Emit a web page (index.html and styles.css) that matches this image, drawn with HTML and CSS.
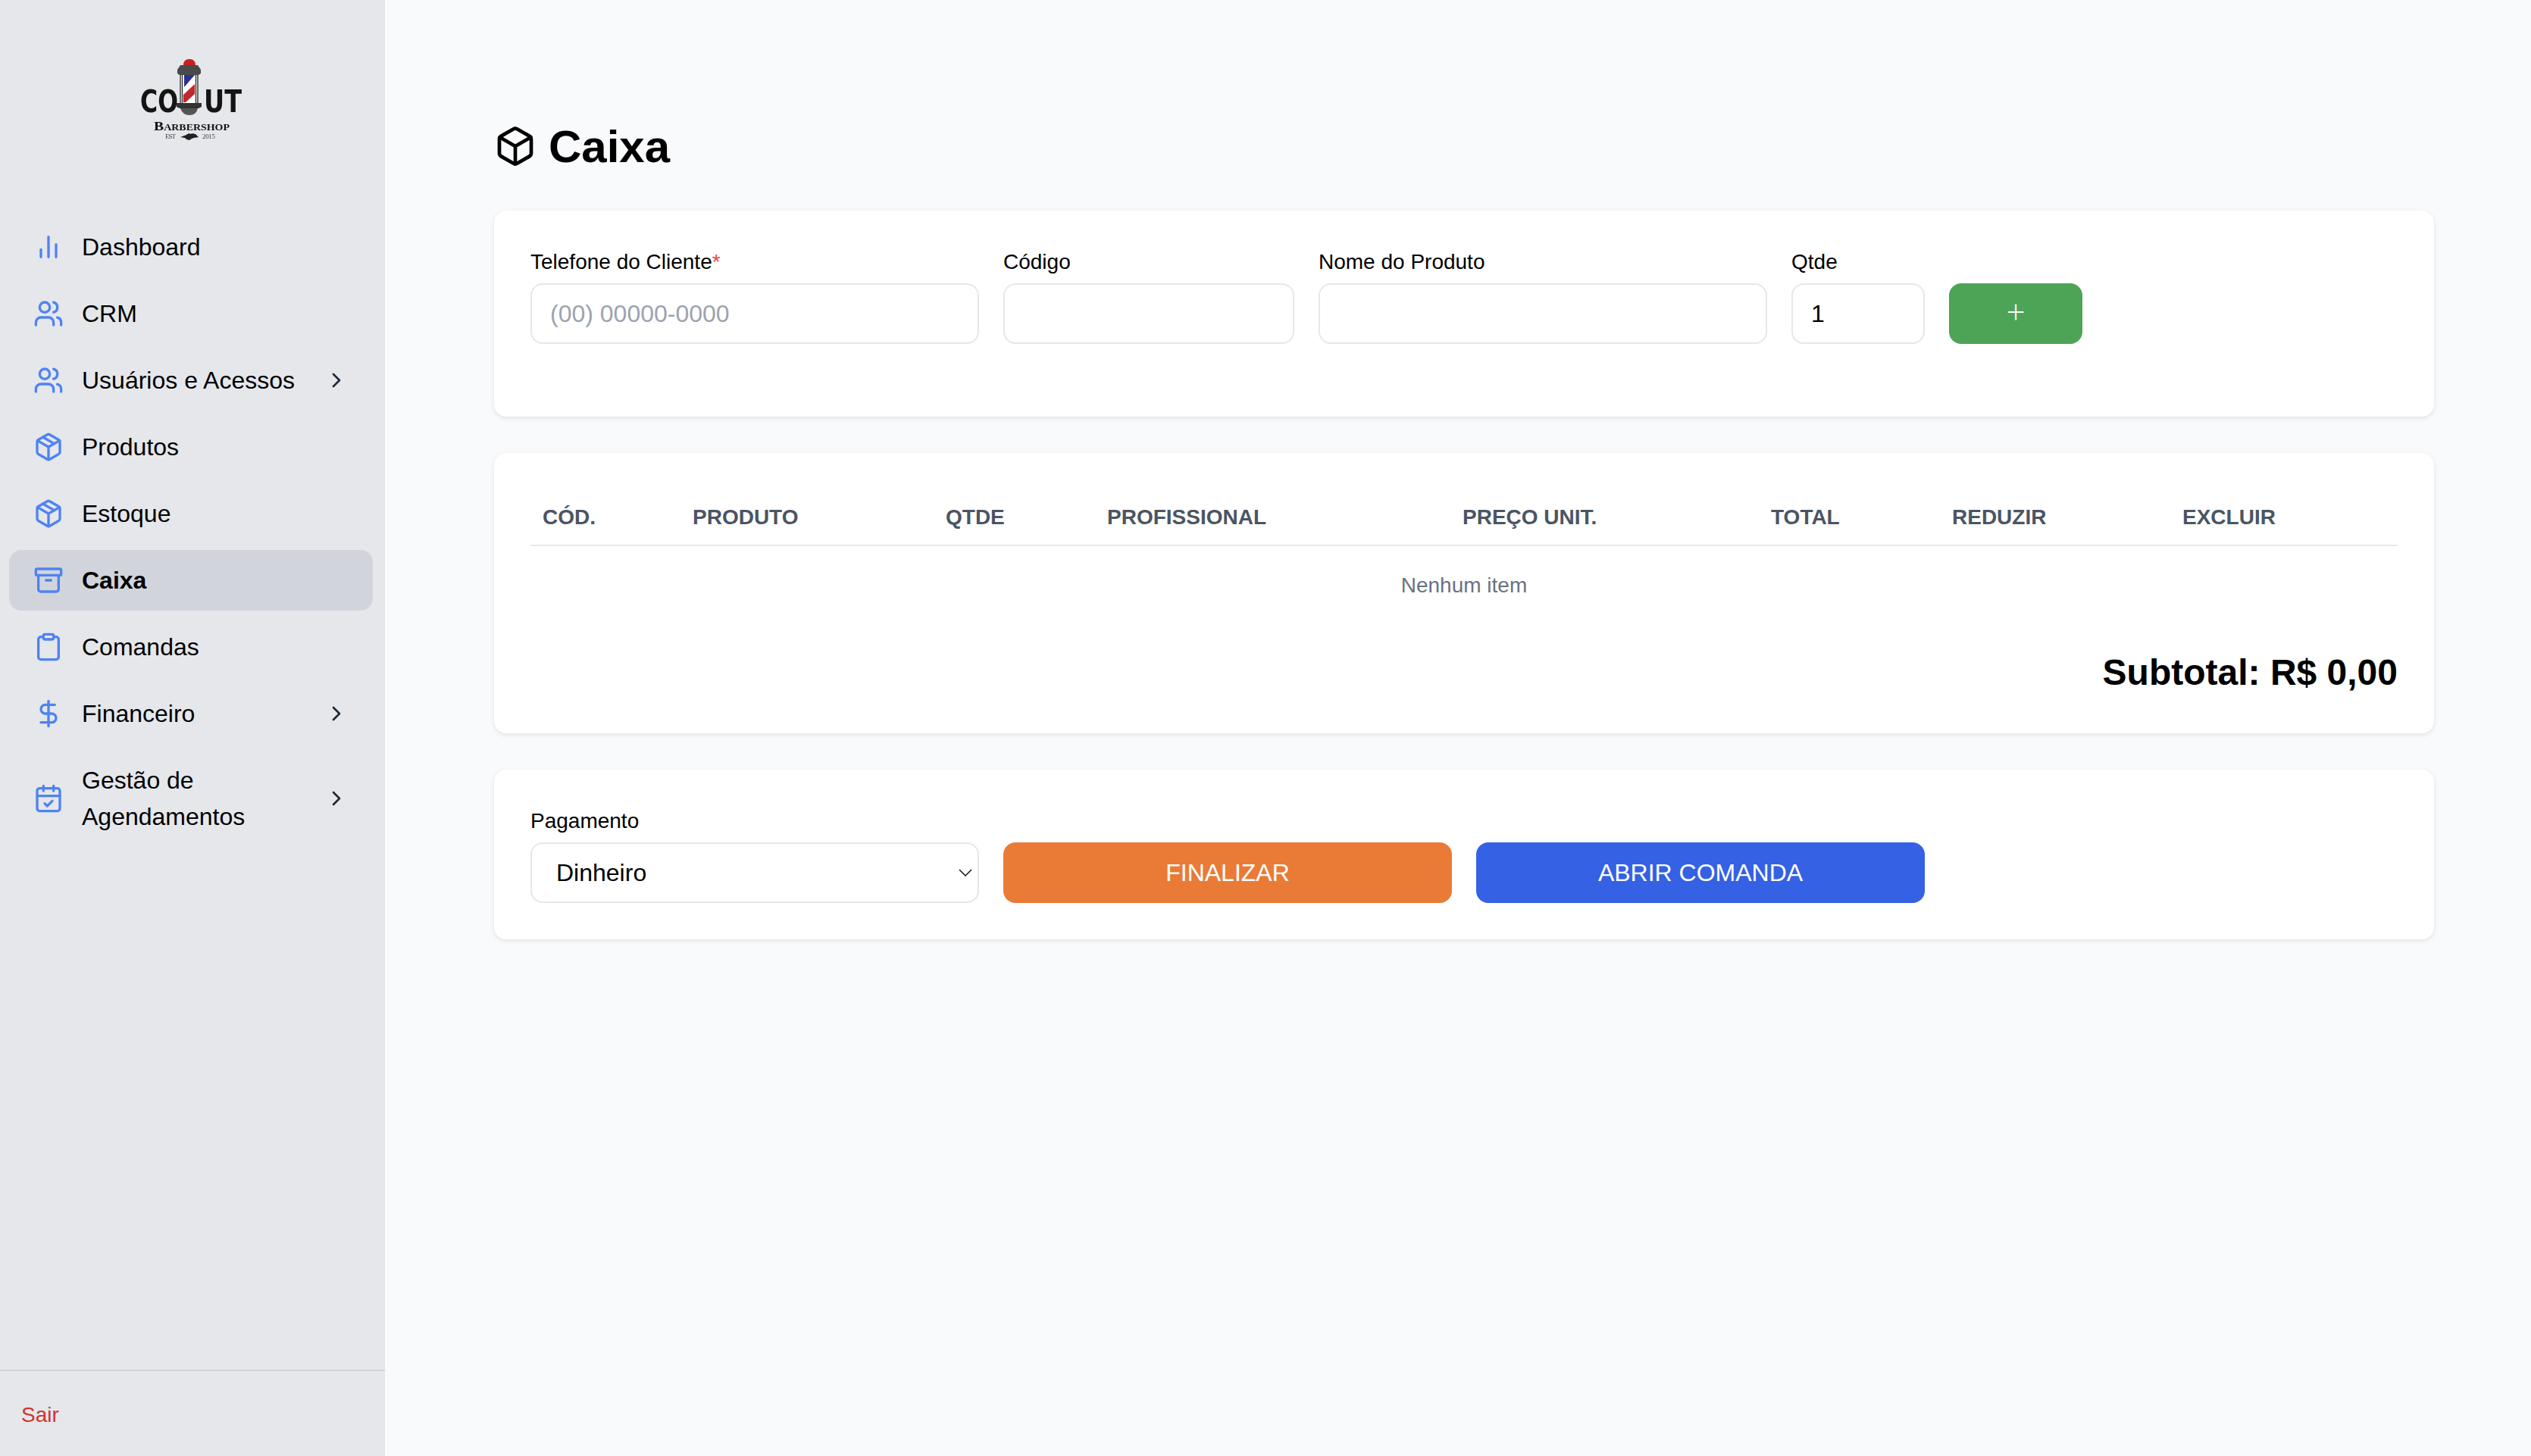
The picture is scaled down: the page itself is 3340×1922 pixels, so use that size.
FILE: index.html
```html
<!DOCTYPE html>
<html lang="pt-BR">
<head>
    <meta charset="UTF-8">
    <title>Caixa</title>
    <link rel="stylesheet" href="styles.css">
</head>
<body>
    <div class="app">
        <aside class="sidebar">
            <div class="brand">
                <svg class="logo" viewBox="0 0 260 160">
                    <defs>
                        <clipPath id="glass"><rect x="122" y="49" width="15" height="36"/></clipPath>
                    </defs>
                    <text class="logo-big" x="65" y="98" textLength="50" lengthAdjust="spacingAndGlyphs">CO</text>
                    <text class="logo-big" x="149" y="98" textLength="50" lengthAdjust="spacingAndGlyphs">UT</text>
                    <path d="M122 36q0-8 8-8t8 8z" fill="#c8201f"/>
                    <path d="M118 36h23l4 6v5l-3 2h-25l-3-2v-5z" fill="#4a4a4a"/>
                    <rect x="117" y="49" width="25" height="37" fill="#ffffff"/>
                    <path d="M118 49v37M120.500 49v37M138.500 49v37M141 49v37" stroke="#333333" stroke-width="1.400"/>
                    <g clip-path="url(#glass)">
                        <path d="M123 49h14l-14 16z" fill="#2a2f96"/>
                        <path d="M138 60v13l-14 13h-3v-10z" fill="#c0272d"/>
                    </g>
                    <path d="M113 86h33v5l-4 2h-25l-4-2z" fill="#333333"/>
                    <path d="M118 93h23q-2 9-11 9t-12-9z" fill="#555555"/>
                    <text class="logo-shop" x="83" y="122" textLength="100" lengthAdjust="spacingAndGlyphs">Barbershop</text>
                    <text class="logo-est" x="98" y="133" textLength="14">EST</text>
                    <path d="M118 131l8-3 3-2 3 1 1-1 5 1 4 4-6 1-3 1-3 2-4-1-2-2z" fill="#222"/>
                    <text class="logo-est" x="147" y="133" textLength="17">2015</text>
                </svg>
            </div>

            <nav class="nav">
                <a class="nav-item">
                    <svg class="nav-icon" viewBox="0 0 24 24"><path d="M18 20V10M12 20V4M6 20v-6"/></svg>
                    <span class="nav-text">Dashboard</span>
                </a>
                <a class="nav-item">
                    <svg class="nav-icon" viewBox="0 0 24 24"><path d="M16 21v-2a4 4 0 0 0-4-4H6a4 4 0 0 0-4 4v2"/><circle cx="9" cy="7" r="4"/><path d="M22 21v-2a4 4 0 0 0-3-3.87"/><path d="M16 3.13a4 4 0 0 1 0 7.75"/></svg>
                    <span class="nav-text">CRM</span>
                </a>
                <a class="nav-item">
                    <svg class="nav-icon" viewBox="0 0 24 24"><path d="M16 21v-2a4 4 0 0 0-4-4H6a4 4 0 0 0-4 4v2"/><circle cx="9" cy="7" r="4"/><path d="M22 21v-2a4 4 0 0 0-3-3.87"/><path d="M16 3.13a4 4 0 0 1 0 7.75"/></svg>
                    <span class="nav-text">Usuários e Acessos</span>
                    <svg class="nav-arrow" viewBox="0 0 24 24"><path d="M9 18l6-6-6-6"/></svg>
                </a>
                <a class="nav-item">
                    <svg class="nav-icon" viewBox="0 0 24 24"><path d="M16.5 9.4l-9-5.19"/><path d="M21 16V8a2 2 0 0 0-1-1.73l-7-4a2 2 0 0 0-2 0l-7 4A2 2 0 0 0 3 8v8a2 2 0 0 0 1 1.73l7 4a2 2 0 0 0 2 0l7-4A2 2 0 0 0 21 16z"/><path d="M3.27 6.96L12 12.01l8.73-5.05M12 22.08V12"/></svg>
                    <span class="nav-text">Produtos</span>
                </a>
                <a class="nav-item">
                    <svg class="nav-icon" viewBox="0 0 24 24"><path d="M16.5 9.4l-9-5.19"/><path d="M21 16V8a2 2 0 0 0-1-1.73l-7-4a2 2 0 0 0-2 0l-7 4A2 2 0 0 0 3 8v8a2 2 0 0 0 1 1.73l7 4a2 2 0 0 0 2 0l7-4A2 2 0 0 0 21 16z"/><path d="M3.27 6.96L12 12.01l8.73-5.05M12 22.08V12"/></svg>
                    <span class="nav-text">Estoque</span>
                </a>
                <a class="nav-item active">
                    <svg class="nav-icon" viewBox="0 0 24 24"><rect x="2" y="3" width="20" height="5" rx="1"/><path d="M4 8v11a2 2 0 0 0 2 2h12a2 2 0 0 0 2-2V8"/><path d="M10 12h4"/></svg>
                    <span class="nav-text">Caixa</span>
                </a>
                <a class="nav-item">
                    <svg class="nav-icon" viewBox="0 0 24 24"><rect x="8" y="2" width="8" height="4" rx="1"/><path d="M16 4h2a2 2 0 0 1 2 2v14a2 2 0 0 1-2 2H6a2 2 0 0 1-2-2V6a2 2 0 0 1 2-2h2"/></svg>
                    <span class="nav-text">Comandas</span>
                </a>
                <a class="nav-item">
                    <svg class="nav-icon" viewBox="0 0 24 24"><path d="M12 2v20"/><path d="M17 5H9.5a3.5 3.5 0 0 0 0 7h5a3.5 3.5 0 0 1 0 7H6"/></svg>
                    <span class="nav-text">Financeiro</span>
                    <svg class="nav-arrow" viewBox="0 0 24 24"><path d="M9 18l6-6-6-6"/></svg>
                </a>
                <a class="nav-item">
                    <svg class="nav-icon" viewBox="0 0 24 24"><path d="M8 2v4M16 2v4"/><rect x="3" y="4" width="18" height="18" rx="2"/><path d="M3 10h18"/><path d="M9 16l2 2 4-4"/></svg>
                    <span class="nav-text">Gestão de Agendamentos</span>
                    <svg class="nav-arrow" viewBox="0 0 24 24"><path d="M9 18l6-6-6-6"/></svg>
                </a>
            </nav>

            <div class="sidebar-footer">
                <a class="logout">Sair</a>
            </div>
        </aside>

        <main class="main">
            <h1 class="page-title">
                <svg class="title-icon" viewBox="0 0 24 24"><path d="M21 16V8a2 2 0 0 0-1-1.73l-7-4a2 2 0 0 0-2 0l-7 4A2 2 0 0 0 3 8v8a2 2 0 0 0 1 1.73l7 4a2 2 0 0 0 2 0l7-4A2 2 0 0 0 21 16z"/><path d="M3.27 6.96L12 12.01l8.73-5.05M12 22.08V12"/></svg>
                Caixa
            </h1>

            <section class="card">
                <div class="form-row add-row">
                    <div class="field w-phone">
                        <label class="field-label">Telefone do Cliente<span class="required">*</span></label>
                        <input class="field-input" type="text" placeholder="(00) 00000-0000">
                    </div>
                    <div class="field w-code">
                        <label class="field-label">Código</label>
                        <input class="field-input" type="text">
                    </div>
                    <div class="field w-phone">
                        <label class="field-label">Nome do Produto</label>
                        <input class="field-input" type="text">
                    </div>
                    <div class="field w-small">
                        <label class="field-label">Qtde</label>
                        <input class="field-input" type="text" value="1">
                    </div>
                    <button class="btn btn-green btn-plus w-small">+</button>
                </div>
            </section>

            <section class="card">
                <table class="items">
                    <colgroup>
                        <col class="c-cod"><col class="c-prod"><col class="c-qtde"><col class="c-prof">
                        <col class="c-preco"><col class="c-total"><col class="c-red"><col class="c-exc">
                    </colgroup>
                    <thead>
                        <tr>
                            <th>Cód.</th>
                            <th>Produto</th>
                            <th>Qtde</th>
                            <th>Profissional</th>
                            <th>Preço Unit.</th>
                            <th>Total</th>
                            <th>Reduzir</th>
                            <th>Excluir</th>
                        </tr>
                    </thead>
                    <tbody>
                        <tr><td class="empty" colspan="8">Nenhum item</td></tr>
                    </tbody>
                </table>
                <div class="subtotal">Subtotal: R$ 0,00</div>
            </section>

            <section class="card">
                <div class="form-row">
                    <div class="field w-phone">
                        <label class="field-label">Pagamento</label>
                        <div class="select-wrap">
                            <select class="field-input field-select">
                                <option>Dinheiro</option>
                            </select>
                            <svg class="select-arrow" viewBox="0 0 20 20"><path d="M2 6l8 8 8-8"/></svg>
                        </div>
                    </div>
                    <button class="btn btn-orange w-phone">FINALIZAR</button>
                    <button class="btn btn-blue w-phone">ABRIR COMANDA</button>
                </div>
            </section>
        </main>
    </div>
</body>
</html>
```

FILE: styles.css
```css
*{
    margin: 0;
    padding: 0;
    box-sizing: border-box;
}
html, body{
    height: 100%;
    overflow: hidden;
}
body{
    font-family: "Liberation Sans", Arial, sans-serif;
    font-size: 32px;
    color: #000000;
    background: #f9fafb;
}
a{
    text-decoration: none;
    color: inherit;
}
.app{
    display: flex;
    height: 100%;
    overflow: hidden;
}

/* sidebar */
.sidebar{
    width: 508px;
    flex-shrink: 0;
    background: #e5e7eb;
    display: flex;
    flex-direction: column;
}
.brand{
    padding: 50px 0 76px 120px;
}
.logo{
    display: block;
    width: 260px;
    height: 160px;
    filter: blur(0.5px);
}
.logo-big{
    font-family: "DejaVu Sans", sans-serif;
    font-weight: bold;
    font-size: 40px;
    fill: #141414;
}
.logo-shop{
    font-family: "Liberation Serif", serif;
    font-weight: bold;
    font-variant: small-caps;
    font-size: 17px;
    fill: #111111;
}
.logo-est{
    font-family: "Liberation Serif", serif;
    font-size: 9px;
    fill: #444444;
}
.nav{
    flex: 1;
    display: flex;
    flex-direction: column;
    gap: 8px;
    padding: 0 16px 0 12px;
}
.nav-item{
    display: flex;
    align-items: center;
    gap: 24px;
    min-height: 80px;
    padding: 16px 32px;
    border-radius: 16px;
    line-height: 48px;
}
.nav-item.active{
    background: #d1d5db;
    font-weight: bold;
}
.nav-icon{
    width: 40px;
    height: 40px;
    flex-shrink: 0;
    fill: none;
    stroke: #4f83f1;
    stroke-width: 2;
    stroke-linecap: round;
    stroke-linejoin: round;
}
.nav-text{
    flex: 1;
}
.nav-arrow{
    width: 32px;
    height: 32px;
    flex-shrink: 0;
    fill: none;
    stroke: #1f2937;
    stroke-width: 2;
    stroke-linecap: round;
    stroke-linejoin: round;
}
.sidebar-footer{
    border-top: 2px solid #d1d5db;
    height: 114px;
    padding: 38px 28px 0;
}
.logout{
    font-size: 28px;
    line-height: 40px;
    color: #d0342c;
}

/* main */
.main{
    flex: 1;
    padding: 156px 128px 0 144px;
}
.page-title{
    display: flex;
    align-items: center;
    gap: 16px;
    height: 74px;
    margin-bottom: 48px;
    font-size: 60px;
    font-weight: bold;
}
.title-icon{
    width: 56px;
    height: 56px;
    fill: none;
    stroke: #000000;
    stroke-width: 2;
    stroke-linecap: round;
    stroke-linejoin: round;
}
.card{
    background: #ffffff;
    border-radius: 16px;
    padding: 48px;
    margin-bottom: 48px;
    box-shadow: 0 2px 6px rgba(0, 0, 0, 0.1);
}

/* forms */
.form-row{
    display: flex;
    align-items: flex-end;
    gap: 32px;
}
.add-row{
    padding-bottom: 48px;
}
.w-phone{
    width: 592px;
}
.w-code{
    width: 384px;
}
.w-small{
    width: 176px;
}
.field-label{
    display: block;
    font-size: 28px;
    line-height: 40px;
    margin-bottom: 8px;
}
.required{
    color: #ef4444;
}
.field-input{
    display: block;
    width: 100%;
    height: 80px;
    padding: 0 24px;
    border: 2px solid #e5e7eb;
    border-radius: 16px;
    background: #ffffff;
    font-family: inherit;
    font-size: 32px;
    color: #000000;
}
.field-input::placeholder{
    color: #9ca3af;
}
.select-wrap{
    position: relative;
}
.field-select{
    appearance: none;
    padding-left: 32px;
}
.select-arrow{
    position: absolute;
    right: 8px;
    top: 30px;
    width: 20px;
    height: 20px;
    fill: none;
    stroke: #111111;
    stroke-width: 1.5;
}
.btn{
    height: 80px;
    border: 0;
    border-radius: 16px;
    font-family: inherit;
    font-size: 32px;
    color: #ffffff;
}
.btn-plus{
    font-family: "Open Sans", sans-serif;
    font-weight: 300;
    font-size: 44px;
    padding-bottom: 6px;
}
.btn-green{
    background: #4ea456;
}
.btn-orange{
    background: #e97b37;
}
.btn-blue{
    background: #3561e4;
}

/* items table */
.items{
    width: 100%;
    table-layout: fixed;
    border-collapse: collapse;
}
.c-cod{ width: 198px; }
.c-prod{ width: 334px; }
.c-qtde{ width: 213px; }
.c-prof{ width: 469px; }
.c-preco{ width: 407px; }
.c-total{ width: 239px; }
.c-red{ width: 304px; }
.c-exc{ width: 300px; }
.items th{
    height: 74px;
    padding: 0 16px;
    border-bottom: 2px solid #e5e7eb;
    text-align: left;
    text-transform: uppercase;
    font-size: 28px;
    color: #4b5563;
}
.empty{
    height: 104px;
    text-align: center;
    font-size: 28px;
    color: #6b7280;
}
.subtotal{
    margin-top: 32px;
    text-align: right;
    font-size: 48px;
    line-height: 64px;
    font-weight: bold;
}
```
